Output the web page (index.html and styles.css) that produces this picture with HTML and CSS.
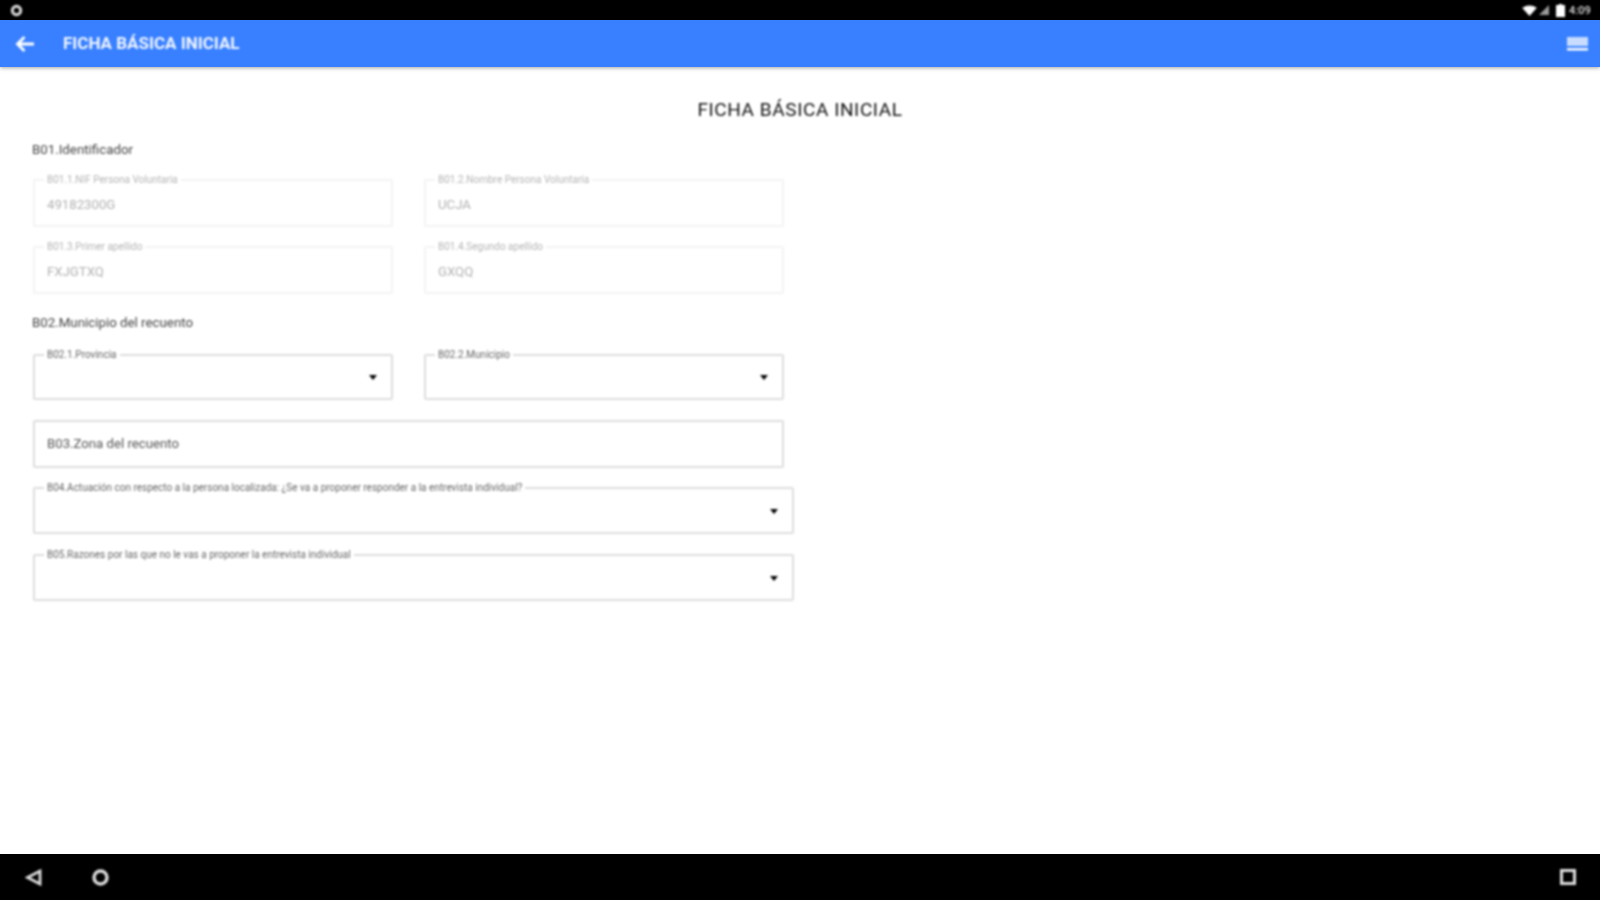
FILE: index.html
```html
<!DOCTYPE html>
<html lang="es">
<head>
<meta charset="utf-8">
<title>Ficha básica inicial</title>
<link rel="stylesheet" href="styles.css">
</head>
<body>
<div class="screen">
  <div class="status">
    <svg class="st-left" viewBox="0 0 14 14"><circle cx="7" cy="7" r="4.5" fill="none" stroke="#ddd" stroke-width="3.200"/></svg>
    <div class="status-right">
      <svg class="st-wifi" viewBox="0 0 16 12"><path d="M0 3 Q8 -2 16 3 L8 12Z" fill="#fff"/></svg>
      <svg class="st-signal" viewBox="0 0 10 10"><path d="M10 0V10H0Z" fill="#999"/></svg>
      <svg class="st-batt" viewBox="0 0 9 13"><path d="M3 0H6V1H9V13H0V1H3Z" fill="#fff"/></svg>
      <span class="st-time">4:09</span>
    </div>
  </div>
  <header class="appbar">
    <svg class="back" viewBox="0 0 20 18"><path d="M19 9H3M9.500 2 2.500 9l7 7" fill="none" stroke="#fff" stroke-width="2.800"/></svg>
    <span class="apptitle">FICHA BÁSICA INICIAL</span>
    <svg class="menu" viewBox="0 0 21 14"><path d="M0 0H21V9H0Z" fill="#c9dcff"/><path d="M0 11H21V13.500H0Z" fill="#fff"/></svg>
  </header>
  <main class="content">
    <h1 class="title">FICHA BÁSICA INICIAL</h1>
    <div class="form">
      <p class="section">B01.Identificador</p>
      <div class="pair">
        <fieldset class="field off"><legend>B01.1.NIF Persona Voluntaria</legend><span class="val">49182300G</span></fieldset>
        <fieldset class="field off"><legend>B01.2.Nombre Persona Voluntaria</legend><span class="val">UCJA</span></fieldset>
        <fieldset class="field off"><legend>B01.3.Primer apellido</legend><span class="val">FXJGTXQ</span></fieldset>
        <fieldset class="field off"><legend>B01.4.Segundo apellido</legend><span class="val">GXQQ</span></fieldset>
      </div>
      <p class="section second">B02.Municipio del recuento</p>
      <div class="pair">
        <fieldset class="field sel"><legend>B02.1.Provincia</legend><i class="caret"></i></fieldset>
        <fieldset class="field sel"><legend>B02.2.Municipio</legend><i class="caret"></i></fieldset>
      </div>
      <div class="zona"><span class="val">B03.Zona del recuento</span></div>
      <fieldset class="field sel wide first"><legend>B04.Actuación con respecto a la persona localizada: ¿Se va a proponer responder a la entrevista individual?</legend><i class="caret"></i></fieldset>
      <fieldset class="field sel wide"><legend>B05.Razones por las que no le vas a proponer la entrevista individual</legend><i class="caret"></i></fieldset>
    </div>
  </main>
  <nav class="navbar">
    <div class="nav-left">
      <svg class="nav-back" viewBox="0 0 17 17"><path d="M15 2V15L2.500 8.500Z" fill="none" stroke="#ddd" stroke-width="2.800"/></svg>
      <svg class="nav-home" viewBox="0 0 19 17"><circle cx="9.500" cy="8.500" r="6.500" fill="none" stroke="#ddd" stroke-width="3.400"/></svg>
    </div>
    <svg class="nav-recent" viewBox="0 0 16 16"><rect x="1.500" y="1.500" width="13" height="13" fill="none" stroke="#ddd" stroke-width="3"/></svg>
  </nav>
</div>
</body>
</html>
```
FILE: styles.css
```css
* { box-sizing: border-box; }
html, body { margin: 0; padding: 0; background: #fff; }
.screen {
  width: 1600px; height: 900px; display: flex; flex-direction: column; overflow: hidden;
  font-family: Roboto, "Liberation Sans", sans-serif;
}
.status svg, .st-time, .appbar svg, .apptitle, .navbar svg, .title, .form { filter: blur(0.8px); }
.status {
  height: 20px; flex: none; background: #000; display: flex; align-items: center;
  justify-content: space-between; padding: 0 6px 0 10px;
}
.st-left { width: 13px; height: 13px; }
.status-right { display: flex; align-items: center; }
.st-wifi { width: 15px; height: 11px; }
.st-signal { width: 10px; height: 10px; margin-left: 2px; }
.st-batt { width: 9px; height: 13px; margin-left: 7px; }
.st-time { color: #ddd; font-size: 11px; font-weight: 500; margin-left: 4px; width: 25px; }
.appbar {
  height: 47px; flex: none; background: #3880ff; display: flex; align-items: center;
  padding: 0 12px 0 15px; box-shadow: 0 1px 4px rgba(0,0,0,.35); position: relative;
}
.back { width: 20px; height: 18px; }
.apptitle { color: #f2f5ff; font-size: 17px; font-weight: 700; margin-left: 28px; margin-bottom: 2px; flex: 1; }
.menu { width: 21px; height: 14px; }
.content { flex: 1; min-height: 0; padding: 0 0 0 32px; }
.title {
  margin: 31px 0 0 -32px; width: 1600px; text-align: center; font-size: 19px; line-height: 24px;
  letter-spacing: 0.600px; font-weight: 400; color: #111;
}
.form { width: 770px; padding-left: 1px; }
.section { margin: 20px 0 0 -1px; font-size: 13.300px; line-height: 16px; color: #444; }
.section.second { margin-top: 21px; }
.pair { display: grid; grid-template-columns: 360px 360px; column-gap: 31px; row-gap: 15px; margin-top: 17px; width: 751px; }
.section.second + .pair { margin-top: 19px; }
.field {
  margin: 0; min-width: 0; padding: 0 12px; height: 52px; position: relative;
  border: 2px solid #dedede; border-radius: 2px; display: flex; align-items: center;
}
.field legend { padding: 0 3px; margin-left: -3px; font-size: 10px; line-height: 10px; color: #666; white-space: nowrap; }
.field.off { border-color: #f3f3f3; }
.field.off legend { color: #b4b4b4; }
.field.off .val { color: #b0b0b0; }
.val { display: block; font-size: 13.200px; line-height: 16px; padding-top: 10px; }
.field.off .val { padding-top: 0; margin-top: -1px; }
.sel { height: 50px; }
.zona {
  width: 751px; height: 48px; margin-top: 20px; border: 2px solid #dedede; border-radius: 2px;
  padding: 0 12px; display: flex; align-items: center; color: #555;
}
.zona .val { padding: 0; }
.wide { height: 51px; width: 761px; margin-top: 16px; }
.wide.first { margin-top: 15px; }
.caret { position: absolute; right: 14px; top: 15px; border: 4px solid transparent; border-top: 5px solid #000; border-bottom: 0; }
.wide .caret { top: 16px; }
.navbar {
  height: 46px; flex: none; background: #000; display: flex; align-items: center;
  justify-content: space-between; padding: 0 24px 0 25px;
}
.nav-left { display: flex; align-items: center; gap: 49px; }
.nav-back { width: 17px; height: 17px; }
.nav-home { width: 19px; height: 17px; }
.nav-recent { width: 16px; height: 16px; }
```
